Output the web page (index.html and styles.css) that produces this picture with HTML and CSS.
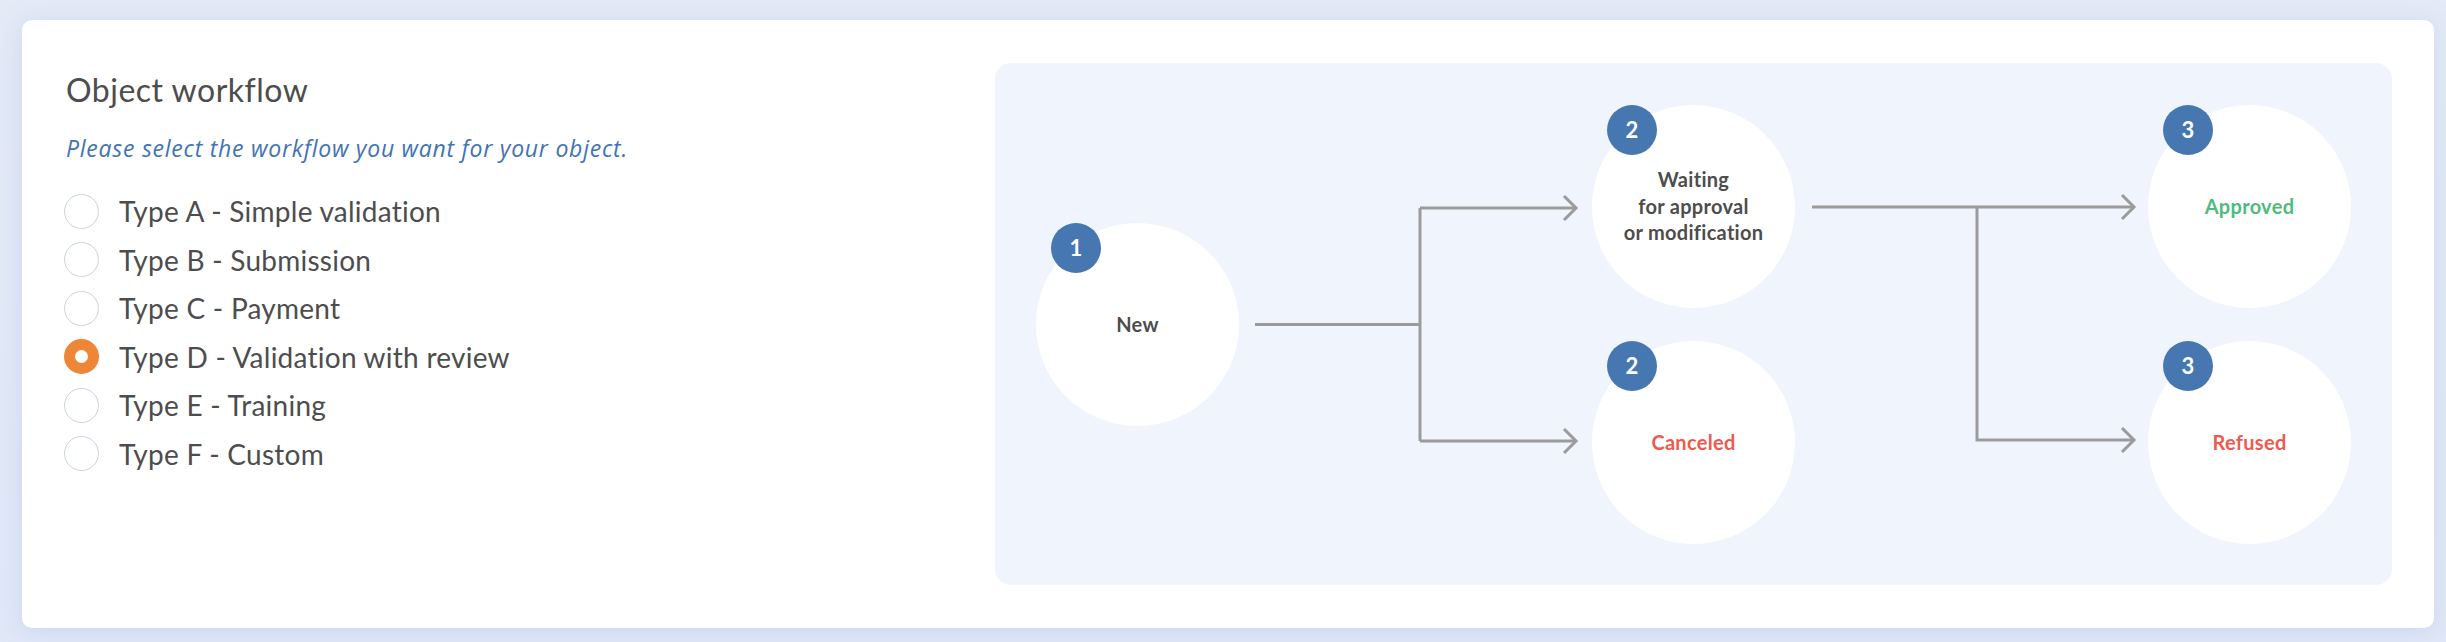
FILE: index.html
```html
<!DOCTYPE html>
<html lang="en">
<head>
    <meta charset="UTF-8">
    <meta name="viewport" content="width=device-width, initial-scale=1.0">
    <title>Object workflow</title>
    <link rel="stylesheet" href="styles.css">
</head>
<body>

    <div class="card">
        <div class="settings">
            <h2 class="title">Object workflow</h2>
            <p class="hint">Please select the workflow you want for your object.</p>

            <div class="options">
                <label class="option"><input type="radio" name="workflow"> Type A - Simple validation</label>
                <label class="option"><input type="radio" name="workflow"> Type B - Submission</label>
                <label class="option"><input type="radio" name="workflow"> Type C - Payment</label>
                <label class="option"><input type="radio" name="workflow" checked> Type D - Validation with review</label>
                <label class="option"><input type="radio" name="workflow"> Type E - Training</label>
                <label class="option"><input type="radio" name="workflow"> Type F - Custom</label>
            </div>
        </div>

        <div class="diagram">
            <div class="step">
                <div class="node"><span class="badge">1</span><span class="label">New</span></div>
            </div>

            <!-- split: new -> waiting / canceled -->
            <svg class="link" width="353" height="439" viewBox="0 0 353 439">
                <path d="M16 219.5 H181 M181 103 V336 M181 103 H337 M181 336 H337" />
                <path d="M325 91 L337 103 L325 115 M325 324 L337 336 L325 348" />
            </svg>

            <div class="step">
                <div class="node"><span class="badge">2</span><span class="label">Waiting<br>for approval<br>or modification</span></div>
                <div class="node"><span class="badge">2</span><span class="label red">Canceled</span></div>
            </div>

            <!-- split: waiting -> approved / refused -->
            <svg class="link" width="353" height="439" viewBox="0 0 353 439">
                <path d="M17 102 H339 M182 102 V335 H339" />
                <path d="M327 90 L339 102 L327 114 M327 323 L339 335 L327 347" />
            </svg>

            <div class="step">
                <div class="node"><span class="badge">3</span><span class="label green">Approved</span></div>
                <div class="node"><span class="badge">3</span><span class="label red">Refused</span></div>
            </div>
        </div>
    </div>

</body>
</html>
```

FILE: styles.css
```css
body {
    font-family: 'Lato', 'Open Sans', sans-serif;
    margin: 0;
    padding: 20px 12px 14px 22px;
    background: linear-gradient(to bottom, #e4eaf6, #e1e8f7);
    color: #4d4d4d;
}

.card {
    display: flex;
    background: #fff;
    padding: 43px 42px 43px 42px;
    border-radius: 10px;
    box-shadow: 0px 4px 24px rgba(160, 180, 225, 0.35);
}

.settings {
    flex: 1;
}

.title {
    margin: 9px 0 0 2px;
    font-size: 32px;
    font-weight: 400;
    letter-spacing: 0.5px;
    line-height: 36px;
    color: #4d4d4d;
}

.hint {
    margin: 27px 0 0 2px;
    font-family: 'Open Sans', 'Lato', sans-serif;
    font-size: 23px;
    font-style: italic;
    letter-spacing: 0.75px;
    line-height: 26px;
    color: #4273b3;
}

.options {
    margin-top: 26px;
}

.option {
    display: flex;
    align-items: center;
    gap: 20px;
    height: 48.5px;
    font-size: 28px;
    letter-spacing: 0.25px;
    color: #4d4d4d;
    cursor: pointer;
}

.option input {
    appearance: none;
    -webkit-appearance: none;
    flex: none;
    width: 35px;
    height: 35px;
    margin: 0;
    border: 1px solid #c9d2e3;
    border-radius: 50%;
    background: #fff;
    box-sizing: border-box;
}

.option input:checked {
    border: 11.5px solid #ee8637;
}

.diagram {
    display: flex;
    align-items: center;
    width: 1397px;
    height: 522px;
    padding: 0 41px;
    box-sizing: border-box;
    background: #f0f4fc;
    border-radius: 16px;
}

.step {
    display: flex;
    flex-direction: column;
    gap: 33px;
}

.node {
    position: relative;
    display: flex;
    align-items: center;
    justify-content: center;
    width: 203px;
    height: 203px;
    border-radius: 50%;
    background: #fff;
    text-align: center;
}

.badge {
    position: absolute;
    top: 0;
    left: 15px;
    width: 50px;
    height: 50px;
    border-radius: 50%;
    background: #4677b1;
    color: #fff;
    font-size: 22px;
    font-weight: bold;
    line-height: 50px;
    text-align: center;
}

.label {
    font-size: 20px;
    font-weight: bold;
    letter-spacing: 0.3px;
    line-height: 26.5px;
    color: #4d4d4d;
}

.label.red {
    color: #ef5a4f;
}

.label.green {
    color: #4fbb7d;
}

.link {
    flex: none;
}

.link path {
    fill: none;
    stroke: #9b9b9b;
    stroke-width: 3;
}
```
